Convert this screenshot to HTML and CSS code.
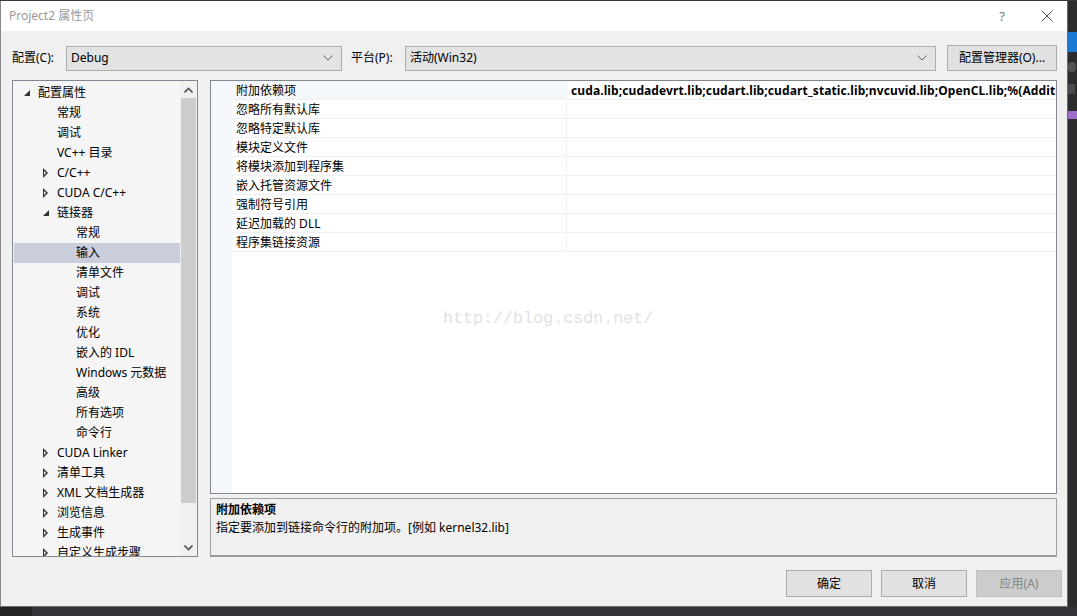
FILE: index.html
```html
<!DOCTYPE html>
<html lang="zh-CN">
<head>
<meta charset="utf-8">
<title>Project2 属性页</title>
<link rel="stylesheet" href="styles.css">
</head>
<body>
<div class="top-strip"></div>
<div class="screen">
  <div class="dialog">
    <div class="titlebar">
      <span class="title">Project2 属性页</span>
      <div class="title-ctrls">
        <span class="help">?</span>
        <svg class="close" width="12" height="12" viewBox="0 0 12 12"><path d="M0.5 0.5 L11.5 11.5 M11.5 0.5 L0.5 11.5" stroke="#555" stroke-width="1"/></svg>
      </div>
    </div>
    <div class="content">
      <div class="toolbar">
        <span class="lbl">配置(C):</span>
        <div class="combo combo-config"><span>Debug</span><svg class="chev" width="10" height="6" viewBox="0 0 10 6"><path d="M0.5 0.5 L5 5 L9.5 0.5" fill="none" stroke="#606060"/></svg></div>
        <span class="lbl lbl2">平台(P):</span>
        <div class="combo combo-platform"><span>活动(Win32)</span><svg class="chev" width="10" height="6" viewBox="0 0 10 6"><path d="M0.5 0.5 L5 5 L9.5 0.5" fill="none" stroke="#606060"/></svg></div>
        <button class="btn btn-mgr">配置管理器(O)...</button>
      </div>
      <div class="main">
        <div class="tree">
          <div class="tree-list">
            <div class="node l0"><span class="exp open"></span><span>配置属性</span></div>
            <div class="node l1"><span class="exp"></span><span>常规</span></div>
            <div class="node l1"><span class="exp"></span><span>调试</span></div>
            <div class="node l1"><span class="exp"></span><span>VC++ 目录</span></div>
            <div class="node l1"><span class="exp closed"></span><span>C/C++</span></div>
            <div class="node l1"><span class="exp closed"></span><span>CUDA C/C++</span></div>
            <div class="node l1"><span class="exp open"></span><span>链接器</span></div>
            <div class="node l2"><span class="exp"></span><span>常规</span></div>
            <div class="node l2 selected"><span class="exp"></span><span>输入</span></div>
            <div class="node l2"><span class="exp"></span><span>清单文件</span></div>
            <div class="node l2"><span class="exp"></span><span>调试</span></div>
            <div class="node l2"><span class="exp"></span><span>系统</span></div>
            <div class="node l2"><span class="exp"></span><span>优化</span></div>
            <div class="node l2"><span class="exp"></span><span>嵌入的 IDL</span></div>
            <div class="node l2"><span class="exp"></span><span>Windows 元数据</span></div>
            <div class="node l2"><span class="exp"></span><span>高级</span></div>
            <div class="node l2"><span class="exp"></span><span>所有选项</span></div>
            <div class="node l2"><span class="exp"></span><span>命令行</span></div>
            <div class="node l1"><span class="exp closed"></span><span>CUDA Linker</span></div>
            <div class="node l1"><span class="exp closed"></span><span>清单工具</span></div>
            <div class="node l1"><span class="exp closed"></span><span>XML 文档生成器</span></div>
            <div class="node l1"><span class="exp closed"></span><span>浏览信息</span></div>
            <div class="node l1"><span class="exp closed"></span><span>生成事件</span></div>
            <div class="node l1"><span class="exp closed"></span><span>自定义生成步骤</span></div>
          </div>
          <div class="vscroll">
            <div class="sb-btn"><svg width="9" height="6" viewBox="0 0 9 6"><path d="M0.5 5.5 L4.5 1.5 L8.5 5.5" fill="none" stroke="#555" stroke-width="1.6"/></svg></div>
            <div class="sb-track"><div class="sb-thumb"></div></div>
            <div class="sb-btn"><svg width="9" height="6" viewBox="0 0 9 6"><path d="M0.5 0.5 L4.5 4.5 L8.5 0.5" fill="none" stroke="#555" stroke-width="1.6"/></svg></div>
          </div>
        </div>
        <div class="right">
          <div class="grid">
            <div class="grid-strip"></div>
            <div class="grid-body">
              <div class="row sel"><div class="name">附加依赖项</div><div class="value">cuda.lib;cudadevrt.lib;cudart.lib;cudart_static.lib;nvcuvid.lib;OpenCL.lib;%(AdditionalDependencies)</div></div>
              <div class="row"><div class="name">忽略所有默认库</div><div class="value"></div></div>
              <div class="row"><div class="name">忽略特定默认库</div><div class="value"></div></div>
              <div class="row"><div class="name">模块定义文件</div><div class="value"></div></div>
              <div class="row"><div class="name">将模块添加到程序集</div><div class="value"></div></div>
              <div class="row"><div class="name">嵌入托管资源文件</div><div class="value"></div></div>
              <div class="row"><div class="name">强制符号引用</div><div class="value"></div></div>
              <div class="row"><div class="name">延迟加载的 DLL</div><div class="value"></div></div>
              <div class="row"><div class="name">程序集链接资源</div><div class="value"></div></div>
            </div>
            <div class="watermark">http://blog.csdn.net/</div>
          </div>
          <div class="desc">
            <div class="desc-title">附加依赖项</div>
            <div class="desc-text">指定要添加到链接命令行的附加项。[例如 kernel32.lib]</div>
          </div>
        </div>
      </div>
      <div class="buttons">
        <button class="btn btn-dlg">确定</button>
        <button class="btn btn-dlg">取消</button>
        <button class="btn btn-dlg disabled">应用(A)</button>
      </div>
    </div>
  </div>
  <div class="side-strip">
    <div class="side-blue"></div>
    <div class="side-gray"></div>
    <div class="side-dim"></div>
    <div class="side-purple"></div>
  </div>
</div>
<div class="bottom-strip"><div class="bs-left"></div><div class="bs-right"></div></div>
</body>
</html>
```

FILE: styles.css
```css
* { box-sizing: border-box; }
html, body { margin: 0; padding: 0; }
body {
  width: 1077px;
  height: 616px;
  overflow: hidden;
  background: #2d2d30;
  font-family: "Noto Sans", "Noto Sans CJK SC", sans-serif;
  font-size: 12px;
  color: #000;
  display: flex;
  flex-direction: column;
}
.top-strip { height: 1px; background: #3a3a3d; flex: none; }
.screen { height: 606px; display: flex; flex: none; }
.bottom-strip { height: 9px; display: flex; flex: none; }
.bs-left { width: 32px; background: #252526; }
.bs-right { flex: 1; background: #343438; }

.dialog {
  width: 1068px;
  height: 606px;
  background: #f0f0f0;
  border-left: 1px solid #8a8a8a;
  border-right: 1px solid #6a6a6a;
  border-bottom: 1px solid #6a6a6a;
  display: flex;
  flex-direction: column;
  flex: none;
}
.titlebar {
  height: 30px;
  background: #fff;
  display: flex;
  align-items: center;
  justify-content: space-between;
  padding: 0 14px 0 8px;
  flex: none;
}
.title { color: #999; font-size: 12px; line-height: 16px; }
.title-ctrls { display: flex; align-items: center; gap: 36px; }
.help { color: #777; font-size: 13px; font-family: "Noto Sans", sans-serif; line-height: 14px; }
.close { display: block; }

.content {
  flex: 1;
  display: flex;
  flex-direction: column;
  padding: 14px 10px 0 11px;
  min-width: 0;
}
.toolbar { display: flex; align-items: center; height: 26px; }
.lbl { width: 54px; line-height: 16px; flex: none; }
.lbl2 { margin-left: 9px; }
.combo {
  height: 25px;
  background: #e3e3e3;
  border: 1px solid #acacac;
  display: flex;
  align-items: center;
  justify-content: space-between;
  padding: 0 8px 0 4px;
  line-height: 16px;
}
.combo-config { width: 276px; flex: none; }
.combo-platform { flex: 1; }
.chev { display: block; }
.btn {
  font-family: inherit;
  font-size: 12px;
  color: #000;
  background: #e1e1e1;
  border: 1px solid #adadad;
  padding: 0;
  line-height: 16px;
}
.btn-mgr { width: 110px; height: 26px; margin-left: 11px; flex: none; }

.main { display: flex; gap: 12px; margin-top: 9px; height: 477px; min-width: 0; }
.tree {
  width: 186px;
  flex: none;
  height: 477px;
  border: 1px solid #828790;
  background: #f5f5f5;
  display: flex;
  overflow: hidden;
}
.tree-list { flex: 1; padding: 2px 0 0 1px; overflow: hidden; min-width: 0; }
.node { height: 20px; display: flex; align-items: center; line-height: 16px; white-space: nowrap; }
.node.l0 { padding-left: 5px; }
.node.l1 { padding-left: 24px; }
.node.l2 { padding-left: 43px; }
.node.selected { background: #cacddb; }
.exp { width: 19px; height: 20px; flex: none; position: relative; }
.exp.open::before {
  content: "";
  position: absolute;
  left: 5px; top: 7px;
  width: 0; height: 0;
  border-left: 6px solid transparent;
  border-bottom: 6px solid #333;
}
.exp.closed::before {
  content: "";
  position: absolute;
  left: 5px; top: 5px;
  width: 0; height: 0;
  border-top: 5px solid transparent;
  border-bottom: 5px solid transparent;
  border-left: 5px solid #333;
}
.exp.closed::after {
  content: "";
  position: absolute;
  left: 6px; top: 7.5px;
  width: 0; height: 0;
  border-top: 2.5px solid transparent;
  border-bottom: 2.5px solid transparent;
  border-left: 2.5px solid #f5f5f5;
}
.vscroll { width: 17px; flex: none; display: flex; flex-direction: column; background: #f0f0f0; }
.sb-btn { height: 17px; display: flex; align-items: center; justify-content: center; flex: none; }
.sb-btn svg { display: block; }
.sb-track { flex: 1; padding: 0 1px; }
.sb-thumb { height: 405px; background: #cdcdcd; }

.right { flex: 1; min-width: 0; display: flex; flex-direction: column; gap: 4px; }
.grid {
  height: 414px;
  background: #fff;
  border: 1px solid #828790;
  display: flex;
  position: relative;
  overflow: hidden;
}
.grid-strip { width: 21px; background: #f4f7fb; flex: none; }
.grid-body { flex: 1; min-width: 0; overflow: hidden; }
.row { height: 19px; display: flex; border-bottom: 1px solid #eef0f4; }
.name { width: 335px; flex: none; padding: 2px 0 0 4px; line-height: 16px; border-right: 1px solid #eef0f4; white-space: nowrap; }
.row.sel .name { background: #f4f7fb; }
.value { flex: 1; min-width: 0; padding: 2px 0 0 4px; font-weight: bold; letter-spacing: 0.1px; line-height: 16px; white-space: nowrap; overflow: hidden; }
.watermark {
  position: absolute;
  left: 232px;
  top: 228px;
  font-family: "Liberation Mono", monospace;
  font-size: 16.7px;
  color: #e2e2e2;
  white-space: nowrap;
}
.desc {
  height: 59px;
  border: 1px solid #a0a0a0;
  border-bottom: 2px solid #9a9a9a;
  background: #f0f0f0;
  padding: 2px 5px;
  line-height: 18px;
}
.desc-title { font-weight: bold; }

.buttons { display: flex; justify-content: flex-end; gap: 9px; margin-top: 13px; margin-right: -5px; }
.btn-dlg { width: 86px; height: 27px; }
.btn-dlg.disabled { background: #cccccc; border-color: #bfbfbf; color: #838383; }

.side-strip { flex: 1; background: #2d2d30; display: flex; flex-direction: column; overflow: hidden; }
.side-blue { margin-top: 31px; height: 20px; background: #1c7ad4; }
.side-gray { margin-top: 10px; height: 10px; width: 8px; background: #555; border-radius: 5px; }
.side-dim { margin-top: 12px; height: 10px; width: 7px; background: #4a4a4e; }
.side-purple { margin-top: 17px; height: 8px; background: #9b6fc7; }
```
